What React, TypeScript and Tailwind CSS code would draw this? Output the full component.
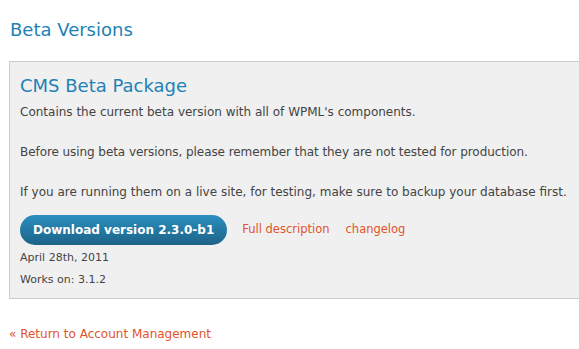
import React from 'react';

const App: React.FC = () => {
  return (
    <div className="bg-white min-h-[349px] w-[579px] overflow-hidden" style={{ fontFamily: '"DejaVu Sans", Verdana, sans-serif' }}>
      <div className="pl-[9px] pt-[19px]">
        <h1 className="text-[18px] leading-[22px] text-[#2281b5] pl-px">Beta Versions</h1>
        <div className="mt-[20px] w-[600px] bg-[#f0f0f0] border border-[#cccccc] pl-[10px] pt-[12px] pb-[7px]">
          <h2 className="text-[18px] leading-[24px] text-[#2281b5]">CMS Beta Package</h2>
          <div className="text-[12px] leading-[20px] text-[#444444]">
            <p className="mt-[4px]">Contains the current beta version with all of WPML's components.</p>
            <p className="mt-[20px] tracking-[-0.07px]">Before using beta versions, please remember that they are not tested for production.</p>
            <p className="mt-[20px]">If you are running them on a live site, for testing, make sure to backup your database first.</p>
          </div>
          <div className="mt-[13px] flex items-center">
            <a className="h-[30px] px-[13px] flex items-center rounded-full bg-gradient-to-b from-[#2b8fc0] to-[#1d6388] text-white font-bold text-[12px]">Download version 2.3.0-b1</a>
            <a className="ml-[15px] text-[11.5px] text-[#e2532b]">Full description</a>
            <a className="ml-[16px] text-[11.5px] text-[#e2532b]">changelog</a>
          </div>
          <p className="mt-[2px] text-[11px] leading-[22px] text-[#444444]">April 28th, 2011</p>
          <p className="text-[11px] leading-[22px] text-[#444444]">Works on: 3.1.2</p>
        </div>
        <a className="block mt-[26px] text-[12px] text-[#e2532b]">« Return to Account Management</a>
      </div>
    </div>
  );
};

export default App;
